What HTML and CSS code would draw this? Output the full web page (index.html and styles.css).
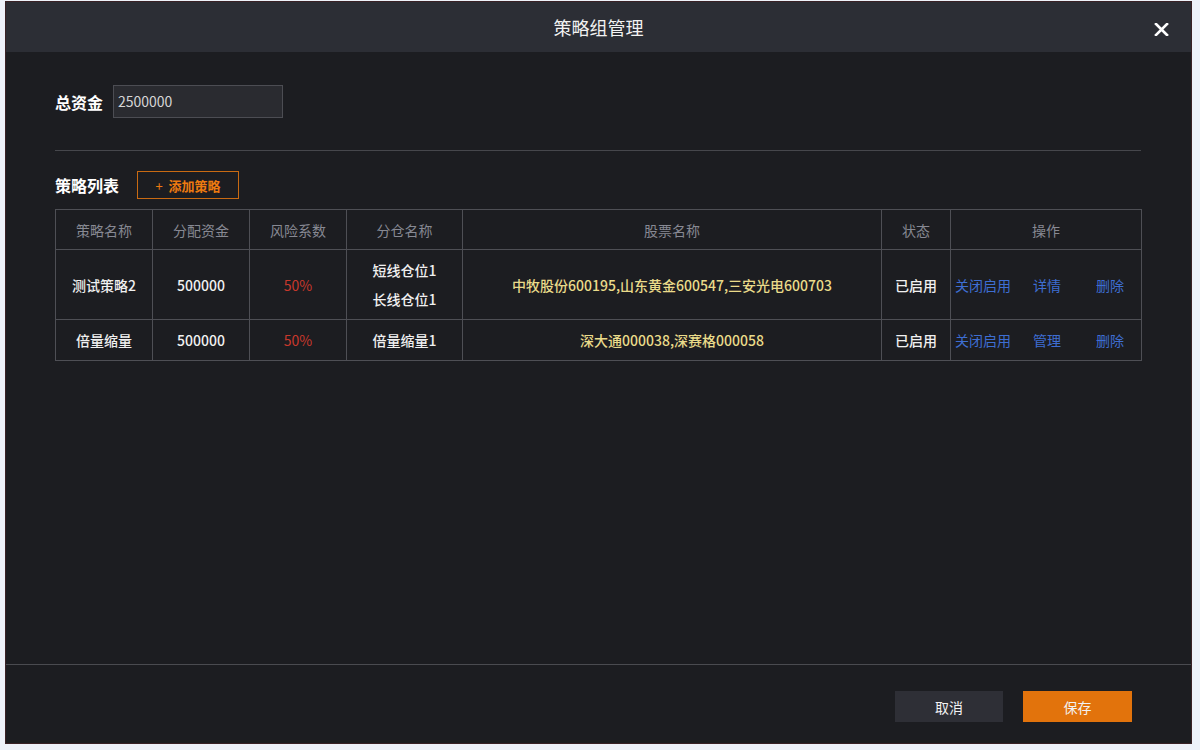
FILE: index.html
```html
<!DOCTYPE html>
<html lang="zh-CN">
<head>
<meta charset="utf-8">
<title>策略组管理</title>
<link rel="stylesheet" href="styles.css">
</head>
<body>
<div class="dialog">
  <div class="dialog-header">
    <span class="dialog-title">策略组管理</span>
    <span class="close" aria-label="关闭">
      <svg width="15" height="13" viewBox="0 0 15 13"><path d="M2 1 L13 12 M13 1 L2 12" stroke="#ffffff" stroke-width="2.6" stroke-linecap="square" fill="none"/></svg>
    </span>
  </div>
  <div class="dialog-body">
    <div class="field-row">
      <label class="field-label">总资金</label>
      <div class="field-input">2500000</div>
    </div>
    <div class="divider"></div>
    <div class="list-head">
      <span class="list-title">策略列表</span>
      <button class="add-btn"><span class="plus">+</span>添加策略</button>
    </div>
    <table class="grid">
      <colgroup>
        <col class="c1"><col class="c2"><col class="c3"><col class="c4"><col class="c5"><col class="c6"><col class="c7">
      </colgroup>
      <thead>
        <tr>
          <th>策略名称</th><th>分配资金</th><th>风险系数</th><th>分仓名称</th><th>股票名称</th><th>状态</th><th>操作</th>
        </tr>
      </thead>
      <tbody>
        <tr class="tall">
          <td>测试策略2</td>
          <td>500000</td>
          <td class="risk">50%</td>
          <td class="multi"><div>短线仓位1</div><div>长线仓位1</div></td>
          <td class="stocks">中牧股份600195,山东黄金600547,三安光电600703</td>
          <td>已启用</td>
          <td class="ops"><span class="op op1">关闭启用</span><span class="op op2">详情</span><span class="op">删除</span></td>
        </tr>
        <tr class="short">
          <td>倍量缩量</td>
          <td>500000</td>
          <td class="risk">50%</td>
          <td>倍量缩量1</td>
          <td class="stocks">深大通000038,深赛格000058</td>
          <td>已启用</td>
          <td class="ops"><span class="op op1">关闭启用</span><span class="op op2">管理</span><span class="op">删除</span></td>
        </tr>
      </tbody>
    </table>
  </div>
  <div class="dialog-footer">
    <button class="btn btn-cancel">取消</button>
    <button class="btn btn-save">保存</button>
  </div>
</div>
</body>
</html>
```

FILE: styles.css
```css
* { box-sizing: border-box; }
html, body { margin: 0; padding: 0; }
body {
  background: #eef2fa;
  font-family: "Noto Sans CJK SC", "Noto Sans", sans-serif;
  width: 1200px;
  height: 750px;
  overflow: hidden;
}
.dialog {
  margin: 1px 8px 0 5px;
  width: 1187px;
  height: 743px;
  border: 1px solid #3a2226;
  display: flex;
  flex-direction: column;
  background: #1c1d21;
}
.dialog-header {
  position: relative;
  height: 50px;
  background: #2c2e35;
  display: flex;
  align-items: center;
  justify-content: center;
  flex-shrink: 0;
}
.dialog-title {
  color: #f2f2f2;
  font-size: 18px;
  line-height: 24px;
}
.close {
  position: absolute;
  right: 22px;
  top: 21px;
  width: 15px;
  height: 13px;
  display: block;
}
.close svg { display: block; }
.dialog-body {
  flex: 1;
  padding: 33px 49px 0 49px;
  background: #1c1d21;
}
.field-row {
  display: flex;
  align-items: center;
  height: 33px;
}
.field-label {
  color: #ffffff;
  font-size: 16px;
  font-weight: 700;
  width: 58px;
}
.field-input {
  width: 170px;
  height: 33px;
  background: #2a2b30;
  border: 1px solid #4c4d53;
  color: #d6d6d6;
  font-size: 14px;
  line-height: 31px;
  padding-left: 4px;
}
.divider {
  margin-top: 32px;
  height: 1px;
  background: #46474c;
  width: 1086px;
}
.list-head {
  margin-top: 20px;
  display: flex;
  align-items: center;
  height: 28px;
}
.list-title {
  color: #ffffff;
  font-size: 16px;
  font-weight: 700;
  width: 82px;
}
.add-btn {
  width: 102px;
  height: 28px;
  background: transparent;
  border: 1px solid #c96a12;
  color: #ee7a10;
  font-family: inherit;
  font-size: 13px;
  font-weight: 700;
  padding: 0;
  display: flex;
  align-items: center;
  justify-content: center;
}
.add-btn .plus { margin-right: 6px; font-weight: 400; }
.grid {
  margin-top: 10px;
  width: 1086px;
  border-collapse: collapse;
  table-layout: fixed;
}
.c1 { width: 97px; }
.c2 { width: 97px; }
.c3 { width: 97px; }
.c4 { width: 116px; }
.c5 { width: 419px; }
.c6 { width: 69px; }
.c7 { width: 191px; }
.grid th, .grid td {
  border: 1px solid #4e4f55;
  text-align: center;
  padding: 0;
  font-size: 14px;
}
.grid th {
  height: 40px;
  color: #878993;
  font-weight: 400;
}
.grid td {
  color: #f0f0f0;
  font-weight: 500;
}
.grid tr.tall td { height: 70px; }
.grid tr.short td { height: 41px; }
.grid td.multi div { line-height: 29px; }
.grid td.risk { color: #c8382c; font-weight: 400; }
.grid td.stocks { color: #eadb8a; }
.grid td.ops {
  text-align: left;
  padding-left: 4px;
  white-space: nowrap;
}
.op {
  display: inline-block;
  color: #3e6ed2;
  font-weight: 400;
}
.op1 { width: 78px; }
.op2 { width: 63px; }
.dialog-footer {
  height: 79px;
  border-top: 1px solid #4a4b50;
  background: #1c1d21;
  display: flex;
  justify-content: flex-end;
  align-items: flex-start;
  padding: 26px 59px 0 0;
  gap: 20px;
  flex-shrink: 0;
}
.btn {
  width: 108px;
  height: 31px;
  border: none;
  font-family: inherit;
  font-size: 14px;
  color: #f2f2f2;
  padding: 0;
}
.btn-cancel { background: #2e2f36; }
.btn-save { background: #e2730c; width: 109px; }
```
